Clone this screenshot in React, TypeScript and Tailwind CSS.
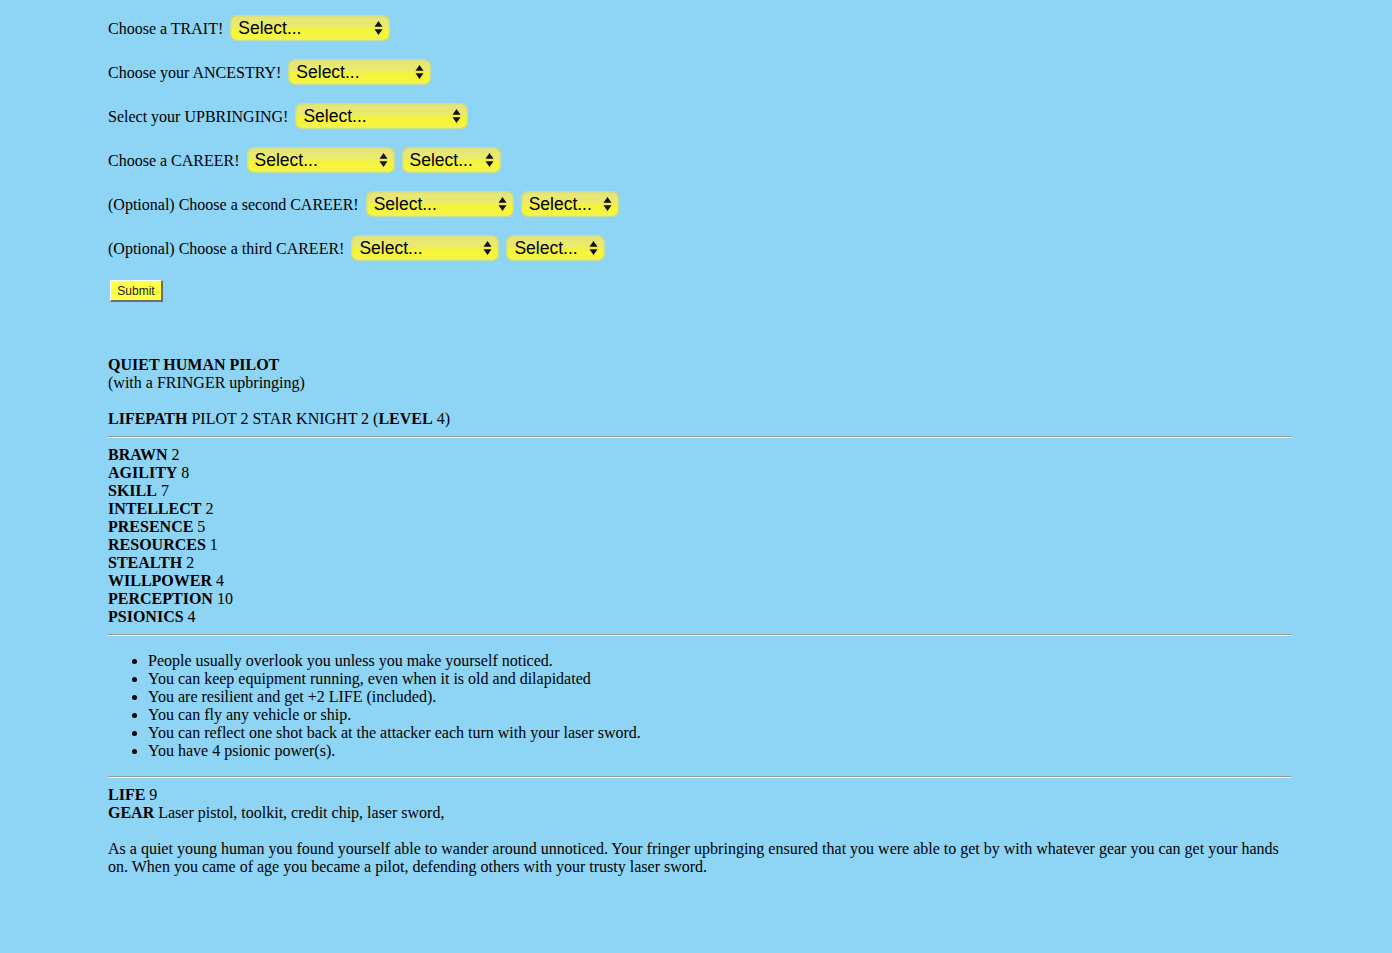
import React from "react";

function Chooser({ width }: { width: number }) {
  return (
    <div
      className="relative flex h-6 items-center rounded-[5px] bg-[linear-gradient(to_bottom,#e4e47c_0%,#ebeb6a_45%,#f3f33c_55%,#f6f640_90%,#f0f080_100%)] pl-[7px] shadow-[inset_0_0_1px_rgba(0,0,0,0.25),0_0_0_1px_rgba(230,230,90,0.6)]"
      style={{ width }}
    >
      <span className="translate-y-[1px] text-[17.5px] leading-none text-black [font-family:'Liberation_Sans',Arial,sans-serif]">
        Select...
      </span>
      <svg
        className="absolute right-[6px] top-1/2 -translate-y-1/2"
        width="9"
        height="16"
        viewBox="0 0 9 16"
      >
        <path d="M4.5 1 L8.5 6.8 L0.5 6.8 Z" fill="#111" />
        <path d="M4.5 15 L8.5 9.2 L0.5 9.2 Z" fill="#111" />
      </svg>
    </div>
  );
}

function Row({ label, widths }: { label: string; widths: number[] }) {
  return (
    <div className="flex h-6 items-center">
      <span className="mr-[8px] translate-y-[1px]">{label}</span>
      <div className="flex gap-[9px]">
        {widths.map((w, i) => (
          <Chooser key={i} width={w} />
        ))}
      </div>
    </div>
  );
}

const stats: [string, number][] = [
  ["BRAWN", 2],
  ["AGILITY", 8],
  ["SKILL", 7],
  ["INTELLECT", 2],
  ["PRESENCE", 5],
  ["RESOURCES", 1],
  ["STEALTH", 2],
  ["WILLPOWER", 4],
  ["PERCEPTION", 10],
  ["PSIONICS", 4],
];

const traits = [
  "People usually overlook you unless you make yourself noticed.",
  "You can keep equipment running, even when it is old and dilapidated",
  "You are resilient and get +2 LIFE (included).",
  "You can fly any vehicle or ship.",
  "You can reflect one shot back at the attacker each turn with your laser sword.",
  "You have 4 psionic power(s).",
];

function Rule() {
  return (
    <div className="h-[2px] border-t border-t-[#9a9a9a] border-b border-b-[#eef6fa]" />
  );
}

export default function App() {
  return (
    <div className="min-h-[953px] w-full bg-[#8ed4f5] text-[16px] leading-[18px] text-black [font-family:'Liberation_Serif','Times_New_Roman',serif]">
      <div className="w-[1291px] pl-[108px] pt-[16px]">
        <div className="flex flex-col gap-[20px]">
          <Row label="Choose a TRAIT!" widths={[158]} />
          <Row label="Choose your ANCESTRY!" widths={[141]} />
          <Row label="Select your UPBRINGING!" widths={[171]} />
          <Row label="Choose a CAREER!" widths={[146, 97]} />
          <Row label="(Optional) Choose a second CAREER!" widths={[146, 96]} />
          <Row label="(Optional) Choose a third CAREER!" widths={[146, 97]} />
        </div>

        <button className="ml-[2px] mt-[20px] flex h-[22px] w-[53px] items-center justify-center border-t border-l border-t-white border-l-white border-r-2 border-b-2 border-r-[#6e6e6e] border-b-[#6e6e6e] bg-[#ffff44] text-[12px] leading-none text-[#222] [font-family:'Liberation_Sans',Arial,sans-serif]">
          Submit
        </button>

        <div className="mt-[54px]">
          <div className="font-bold">QUIET HUMAN PILOT</div>
          <div>(with a FRINGER upbringing)</div>
          <div className="h-[18px]" />
          <div>
            <b>LIFEPATH</b> PILOT 2 STAR KNIGHT 2 (<b>LEVEL</b> 4)
          </div>

          <div className="my-[8px]">
            <Rule />
          </div>

          <div>
            {stats.map(([k, v]) => (
              <div key={k}>
                <b>{k}</b> {v}
              </div>
            ))}
          </div>

          <div className="mt-[8px]">
            <Rule />
          </div>

          <ul className="my-[16px] list-disc pl-[40px]">
            {traits.map((t) => (
              <li key={t}>{t}</li>
            ))}
          </ul>

          <Rule />

          <div className="mt-[8px]">
            <div>
              <b>LIFE</b> 9
            </div>
            <div>
              <b>GEAR</b> Laser pistol, toolkit, credit chip, laser sword,
            </div>
            <div className="h-[18px]" />
            <p className="w-[1183px]">
              As a quiet young human you found yourself able to wander around unnoticed. Your fringer upbringing
              ensured that you were able to get by with whatever gear you can get your hands on. When you came of age
              you became a pilot, defending others with your trusty laser sword.
            </p>
          </div>
        </div>
      </div>
    </div>
  );
}
